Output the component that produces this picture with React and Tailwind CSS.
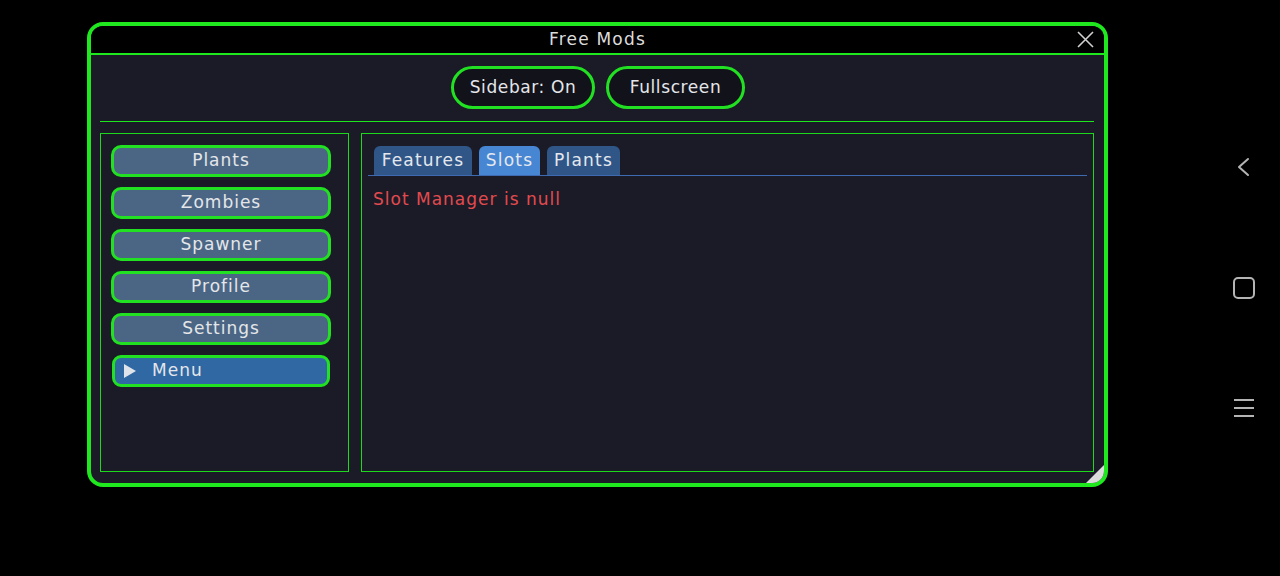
import React from "react";

const font = { fontFamily: "'DejaVu Sans', Verdana, sans-serif" };

function SideButton({ label }) {
  return (
    <div className="flex h-[32px] w-[220px] items-center justify-center rounded-[10px] border-[3px] border-[#22e022] bg-[#4b6684] text-[17px] tracking-[1px] text-[#e4e6ea]">
      {label}
    </div>
  );
}

function Tab({ label, active, width }) {
  return (
    <div
      className={
        "flex h-[29px] items-center justify-center rounded-t-[6px] text-[17px] tracking-[1.2px] text-[#e4e8ee] " +
        width +
        (active ? " bg-[#4686d2]" : " bg-[#2f5687]")
      }
    >
      {label}
    </div>
  );
}

export default function App() {
  return (
    <div className="relative flex h-[576px] w-[1280px] bg-black" style={font}>
      {/* mod window */}
      <div className="relative ml-[87px] mt-[22px] flex h-[465px] w-[1021px] flex-col overflow-hidden rounded-[16px] border-[4px] border-[#1fe81f] bg-[#1a1b26]">
        {/* title bar */}
        <div className="relative flex h-[29px] shrink-0 items-center justify-center border-b-[2px] border-[#1fe81f] bg-black">
          <span className="text-[17px] tracking-[1.2px] text-[#dcdcdc]">Free Mods</span>
          <svg className="absolute right-[10px] top-[5px]" width="17" height="17" viewBox="0 0 17 17">
            <path d="M1 1 L16 16 M16 1 L1 16" stroke="#d0d0d0" strokeWidth="1.6" />
          </svg>
        </div>

        {/* body */}
        <div className="flex flex-1 flex-col pb-[11px] pl-[9px] pr-[10px] pt-[11px]">
          <div className="flex justify-center gap-[11px] pl-[2px]">
            <div className="flex h-[43px] w-[144px] items-center justify-center rounded-full border-[3px] border-[#22e022] bg-[#12131a] text-[17px] tracking-[0.6px] text-[#e4e6ea]">
              Sidebar: On
            </div>
            <div className="flex h-[43px] w-[139px] items-center justify-center rounded-full border-[3px] border-[#22e022] bg-[#12131a] text-[17px] tracking-[0.6px] text-[#e4e6ea]">
              Fullscreen
            </div>
          </div>

          <div className="mt-[12px] h-px bg-[#1ee61e]" />

          <div className="mt-[11px] flex flex-1 gap-[12px]">
            {/* sidebar */}
            <div className="flex w-[249px] flex-col gap-[10px] border border-[#1ed81e] pl-[10px] pt-[11px]">
              <SideButton label="Plants" />
              <SideButton label="Zombies" />
              <SideButton label="Spawner" />
              <SideButton label="Profile" />
              <SideButton label="Settings" />
              <div className="ml-px flex h-[32px] w-[218px] items-center gap-[16px] rounded-[9px] border-[3px] border-[#22e022] bg-[#2f68a3] pl-[8px] text-[17px] tracking-[1px] text-[#e4e6ea]">
                <svg width="13" height="14" viewBox="0 0 13 14">
                  <path d="M1 0 L13 7 L1 14 Z" fill="#dfe3ea" />
                </svg>
                <span>Menu</span>
              </div>
            </div>

            {/* content */}
            <div className="flex flex-1 flex-col border border-[#1ed81e] px-[6px] pt-[12px]">
              <div className="flex gap-[7px] border-b border-[#3d6ab0] pl-[6px]">
                <Tab label="Features" width="w-[98px]" />
                <Tab label="Slots" width="w-[61px]" active />
                <Tab label="Plants" width="w-[73px]" />
              </div>
              <div className="mt-[11px] pl-[5px] text-[17px] tracking-[1px] text-[#e24a4f]">
                Slot Manager is null
              </div>
            </div>
          </div>
        </div>

        {/* resize grip */}
        <svg className="absolute bottom-0 right-0" width="18" height="18" viewBox="0 0 18 18">
          <path d="M18 0 L18 18 L0 18 Z" fill="#dcdcdc" />
        </svg>
      </div>

      {/* system navigation */}
      <div className="ml-auto mr-[24px] flex w-[24px] flex-col items-center pt-[155px]">
        <svg width="24" height="24" viewBox="0 0 24 24">
          <path d="M16 4 L7 12 L16 20" fill="none" stroke="#b4b4b4" strokeWidth="2" strokeLinecap="round" strokeLinejoin="round" />
        </svg>
        <svg className="mt-[97px]" width="24" height="24" viewBox="0 0 24 24">
          <rect x="2" y="2" width="20" height="20" rx="4" fill="none" stroke="#b4b4b4" strokeWidth="2" />
        </svg>
        <svg className="mt-[96px]" width="24" height="24" viewBox="0 0 24 24">
          <path d="M2 4 H22 M2 12 H22 M2 20 H22" stroke="#b4b4b4" strokeWidth="2.2" />
        </svg>
      </div>
    </div>
  );
}
